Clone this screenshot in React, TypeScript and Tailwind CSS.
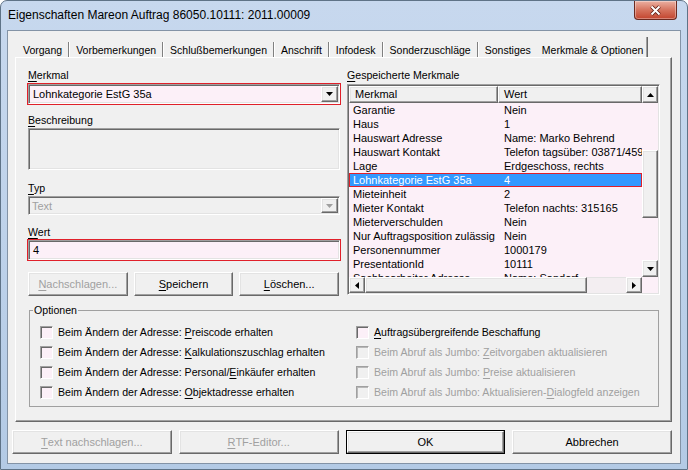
import React from "react";

const SUNKEN =
  "border border-t-[#a0a0a0] border-l-[#a0a0a0] border-r-white border-b-white shadow-[inset_1px_1px_0_#696969,inset_-1px_-1px_0_#e3e3e3] p-[1px]";
const RAISED =
  "border border-t-white border-l-white border-r-[#696969] border-b-[#696969] shadow-[inset_-1px_-1px_0_#a0a0a0,inset_1px_1px_0_#e3e3e3] bg-[#f0f0f0]";

/* underline the mnemonic letter */
function Mn({ text, at = 0 }: { text: string; at?: number }) {
  return (
    <>
      {text.slice(0, at)}
      <span className="underline underline-offset-[2px] decoration-1">{text[at]}</span>
      {text.slice(at + 1)}
    </>
  );
}

function Arrow({ dir, color = "#000" }: { dir: "up" | "down" | "left" | "right"; color?: string }) {
  const vertical = dir === "up" || dir === "down";
  const w = vertical ? 7 : 4;
  const h = vertical ? 4 : 7;
  const d = {
    down: "M0 0H7L3.5 4Z",
    up: "M0 4H7L3.5 0Z",
    left: "M4 0V7L0 3.5Z",
    right: "M0 0V7L4 3.5Z",
  }[dir];
  return (
    <svg width={w} height={h} viewBox={`0 0 ${w} ${h}`}>
      <path d={d} fill={color} />
    </svg>
  );
}

function TitleBar() {
  return (
    <div className="h-[29px] flex items-start justify-between shrink-0">
      <div className="pl-[7px] pt-[6px] text-[12px] leading-[16px] text-black">
        Eigenschaften Mareon Auftrag 86050.10111: 2011.00009
      </div>
      <div className="mr-[10px] w-[43px] h-[19px] rounded-b-[4px] border border-t-0 border-[#6b2a20] bg-gradient-to-b from-[#eab0a2] via-[#d5735e] to-[#c2432d] flex items-center justify-center shadow-[inset_0_0_0_1px_rgba(255,255,255,0.35)]">
        <svg width="13" height="11" viewBox="0 0 13 11">
          <path d="M2.5 1.5L10.5 9.5M10.5 1.5L2.5 9.5" stroke="#5a1a10" strokeWidth="3.6" />
          <path d="M2.5 1.5L10.5 9.5M10.5 1.5L2.5 9.5" stroke="#ffffff" strokeWidth="2" />
        </svg>
      </div>
    </div>
  );
}

const TABS = ["Vorgang", "Vorbemerkungen", "Schlußbemerkungen", "Anschrift", "Infodesk", "Sonderzuschläge", "Sonstiges"];

function TabStrip() {
  return (
    <div className="ml-[7px] pl-[2px] mt-[6px] h-[20px] flex items-end shrink-0 text-[10.5px]">
      {TABS.map((t, i) => (
        <React.Fragment key={t}>
          <span className="h-[19px] px-[6px] pt-[5px] leading-[14px] whitespace-nowrap">{t}</span>
          {i < TABS.length - 1 && (
            <span className="h-[15px] w-[2px] border-l border-l-[#808080] border-r border-r-white" />
          )}
        </React.Fragment>
      ))}
      <span className="h-[20px] pl-[5px] pr-[4px] pt-[6px] leading-[14px] whitespace-nowrap border-r border-r-[#696969] shadow-[inset_-1px_0_0_#a0a0a0]">
        Merkmale &amp; Optionen
      </span>
    </div>
  );
}

const ROWS: [string, string][] = [
  ["Garantie", "Nein"],
  ["Haus", "1"],
  ["Hauswart Adresse", "Name: Marko Behrend"],
  ["Hauswart Kontakt", "Telefon tagsüber: 03871/459876"],
  ["Lage", "Erdgeschoss, rechts"],
  ["Lohnkategorie EstG 35a", "4"],
  ["Mieteinheit", "2"],
  ["Mieter Kontakt", "Telefon nachts: 315165"],
  ["Mieterverschulden", "Nein"],
  ["Nur Auftragsposition zulässig", "Nein"],
  ["Personennummer", "1000179"],
  ["PresentationId", "10111"],
  ["Sachbearbeiter Adresse", "Name: Sandorf"],
];

function MerkmalList() {
  return (
    <div className={`${SUNKEN} h-[211px] bg-[#fcf0f8] flex flex-col`}>
      <div className="flex h-[17px] shrink-0">
        <div className={`${RAISED} w-[149px] pl-[5px] leading-[15px]`}>Merkmal</div>
        <div className={`${RAISED} w-[144px] pl-[5px] leading-[15px]`}>Wert</div>
        <div className={`${RAISED} w-[16px] flex items-center justify-center`}>
          <Arrow dir="up" />
        </div>
      </div>
      <div className="flex h-[174px] shrink-0">
        <div className="w-[293px] h-[174px] overflow-hidden">
          {ROWS.map(([k, v], i) => {
            const sel = i === 5;
            return (
              <div
                key={k}
                className={`flex h-[14px] leading-[14px] whitespace-nowrap ${
                  sel ? "bg-[#3399ff] text-white shadow-[inset_0_0_0_1px_#e0202a]" : ""
                }`}
              >
                <div className="w-[149px] pl-[4px] overflow-hidden">{k}</div>
                <div className="w-[144px] pl-[6px] overflow-hidden">{v}</div>
              </div>
            );
          })}
        </div>
        <div className="w-[16px] flex flex-col">
          <div className="h-[47px]" />
          <div className={`${RAISED} h-[68px]`} />
          <div className="h-[42px]" />
          <div className={`${RAISED} h-[17px] flex items-center justify-center`}>
            <Arrow dir="down" />
          </div>
        </div>
      </div>
      <div className="flex h-[16px] shrink-0">
        <div className={`${RAISED} w-[16px] flex items-center justify-center`}>
          <Arrow dir="left" />
        </div>
        <div className={`${RAISED} w-[222px]`} />
        <div className="w-[39px] bg-[#f3eef1] border-t border-[#e3e3e3]" />
        <div className={`${RAISED} w-[16px] flex items-center justify-center`}>
          <Arrow dir="right" />
        </div>
        <div className="w-[16px]" />
      </div>
    </div>
  );
}

function Button({ children, disabled, className = "" }: { children: React.ReactNode; disabled?: boolean; className?: string }) {
  return (
    <div
      className={`${RAISED} flex items-center justify-center leading-[14px] whitespace-nowrap ${
        disabled ? "text-[#a0a0a0]" : "text-black"
      } ${className}`}
    >
      {children}
    </div>
  );
}

function Check({ label, disabled }: { label: React.ReactNode; disabled?: boolean }) {
  return (
    <div className="flex items-center gap-[5px] h-[20px]">
      <span
        className={`w-[13px] h-[13px] border border-t-[#a0a0a0] border-l-[#a0a0a0] border-r-white border-b-white ${
          disabled
            ? "bg-[#f0f0f0] shadow-[inset_1px_1px_0_#b8b8b8]"
            : "bg-[#fcf0f8] shadow-[inset_1px_1px_0_#696969]"
        }`}
      />
      <span className={`leading-[14px] whitespace-nowrap text-[10.6px] ${disabled ? "text-[#a0a0a0]" : "text-black"}`}>
        {label}
      </span>
    </div>
  );
}

function TabPage() {
  return (
    <div className="ml-[7px] mr-[8px] h-[365px] shrink-0 border border-t-white border-l-white border-r-[#696969] border-b-[#696969] shadow-[inset_-1px_-1px_0_#a0a0a0]">
      <div className="flex pl-[11px] gap-[6px]">
        {/* left column */}
        <div className="w-[314px] flex flex-col">
          <div className="mt-[10px] h-[14px] leading-[14px] pl-[1px] text-[10.6px]">
            <Mn text="Merkmal" />
          </div>
          <div className="mt-[1px] h-[22px] border border-[#e0202a]">
            <div className={`${SUNKEN} h-full bg-[#fcf0f8] flex items-center`}>
              <span className="flex-1 pl-[3px] leading-[14px]">Lohnkategorie EstG 35a</span>
              <span className={`${RAISED} w-[17px] h-[16px] flex items-center justify-center`}>
                <Arrow dir="down" />
              </span>
            </div>
          </div>
          <div className="mt-[8px] h-[14px] leading-[14px] pl-[1px] text-[10.6px]">
            <Mn text="Beschreibung" />
          </div>
          <div className={`${SUNKEN} mt-[1px] mx-[1px] h-[42px] bg-[#f0f0f0]`} />
          <div className="mt-[11px] h-[14px] leading-[14px] pl-[1px] text-[10.6px]">
            <Mn text="Typ" />
          </div>
          <div className={`${SUNKEN} mt-[1px] mx-[1px] h-[19px] bg-[#f0f0f0] flex items-center`}>
            <span className="flex-1 pl-[2px] leading-[14px] text-[#a0a0a0]">Text</span>
            <span className={`${RAISED} w-[17px] h-[15px] flex items-center justify-center`}>
              <Arrow dir="down" color="#a0a0a0" />
            </span>
          </div>
          <div className="mt-[10px] h-[14px] leading-[14px] pl-[1px] text-[10.6px]">
            <Mn text="Wert" />
          </div>
          <div className="h-[22px] border border-[#e0202a]">
            <div className={`${SUNKEN} h-full bg-[#fcf0f8] flex items-center`}>
              <span className="pl-[3px] leading-[14px]">4</span>
            </div>
          </div>
          <div className="mt-[11px] ml-[1px] mr-[2px] h-[24px] grid grid-cols-3 gap-[6px]">
            <Button disabled>
              <Mn text="Nachschlagen..." />
            </Button>
            <Button>
              <Mn text="Speichern" />
            </Button>
            <Button>
              <Mn text="Löschen..." />
            </Button>
          </div>
        </div>

        {/* right column */}
        <div className="w-[313px] flex flex-col">
          <div className="mt-[10px] h-[14px] leading-[14px] text-[10.6px]">
            <Mn text="Gespeicherte Merkmale" />
          </div>
          <div className="mt-[2px]">
            <MerkmalList />
          </div>
        </div>
      </div>

      <fieldset className="ml-[13px] mt-[7px] w-[630px] h-[104px] border border-[#a0a0a0] p-0">
        <legend className="ml-[3px] px-[1px] leading-[14px] text-[10.6px]">Optionen</legend>
        <div className="grid grid-cols-[316px_1fr] auto-rows-[20px] pl-[10px] pt-[5px]">
          <Check label={<>Beim Ändern der Adresse: <Mn text="Preiscode" /> erhalten</>} />
          <Check label={<Mn text="Auftragsübergreifende Beschaffung" />} />
          <Check label={<>Beim Ändern der Adresse: <Mn text="Kalkulationszuschlag" /> erhalten</>} />
          <Check disabled label={<>Beim Abruf als Jumbo: <Mn text="Zeitvorgaben" /> aktualisieren</>} />
          <Check label={<>Beim Ändern der Adresse: Personal/<Mn text="Einkäufer" /> erhalten</>} />
          <Check disabled label={<>Beim Abruf als Jumbo: <Mn text="Preise" /> aktualisieren</>} />
          <Check label={<>Beim Ändern der Adresse: <Mn text="Objektadresse" /> erhalten</>} />
          <Check disabled label={<>Beim Abruf als Jumbo: Aktualisieren-<Mn text="Dialogfeld" /> anzeigen</>} />
        </div>
      </fieldset>
    </div>
  );
}

export default function App() {
  return (
    <div className="w-[688px] h-[470px] flex flex-col rounded-t-[7px] border border-[#5f7387] bg-gradient-to-b from-[#c7d8ee] via-[#bed2ea] to-[#b3cae5] font-['Liberation_Sans',Arial,sans-serif] text-[11px] text-black overflow-hidden select-none">
      <TitleBar />
      <div className="mx-[6px] mb-[5px] flex-1 flex flex-col border border-[#8393a6] bg-[#f0f0f0]">
        <TabStrip />
        <TabPage />
        <div className="mt-[8px] h-[24px] grid grid-cols-4 gap-[7px] pl-[4px] pr-[8px] shrink-0">
          <Button disabled>
            <Mn text="Text nachschlagen..." />
          </Button>
          <Button disabled>
            <Mn text="RTF-Editor..." />
          </Button>
          <div className="border border-black flex">
            <Button className="flex-1">OK</Button>
          </div>
          <Button>Abbrechen</Button>
        </div>
      </div>
    </div>
  );
}
